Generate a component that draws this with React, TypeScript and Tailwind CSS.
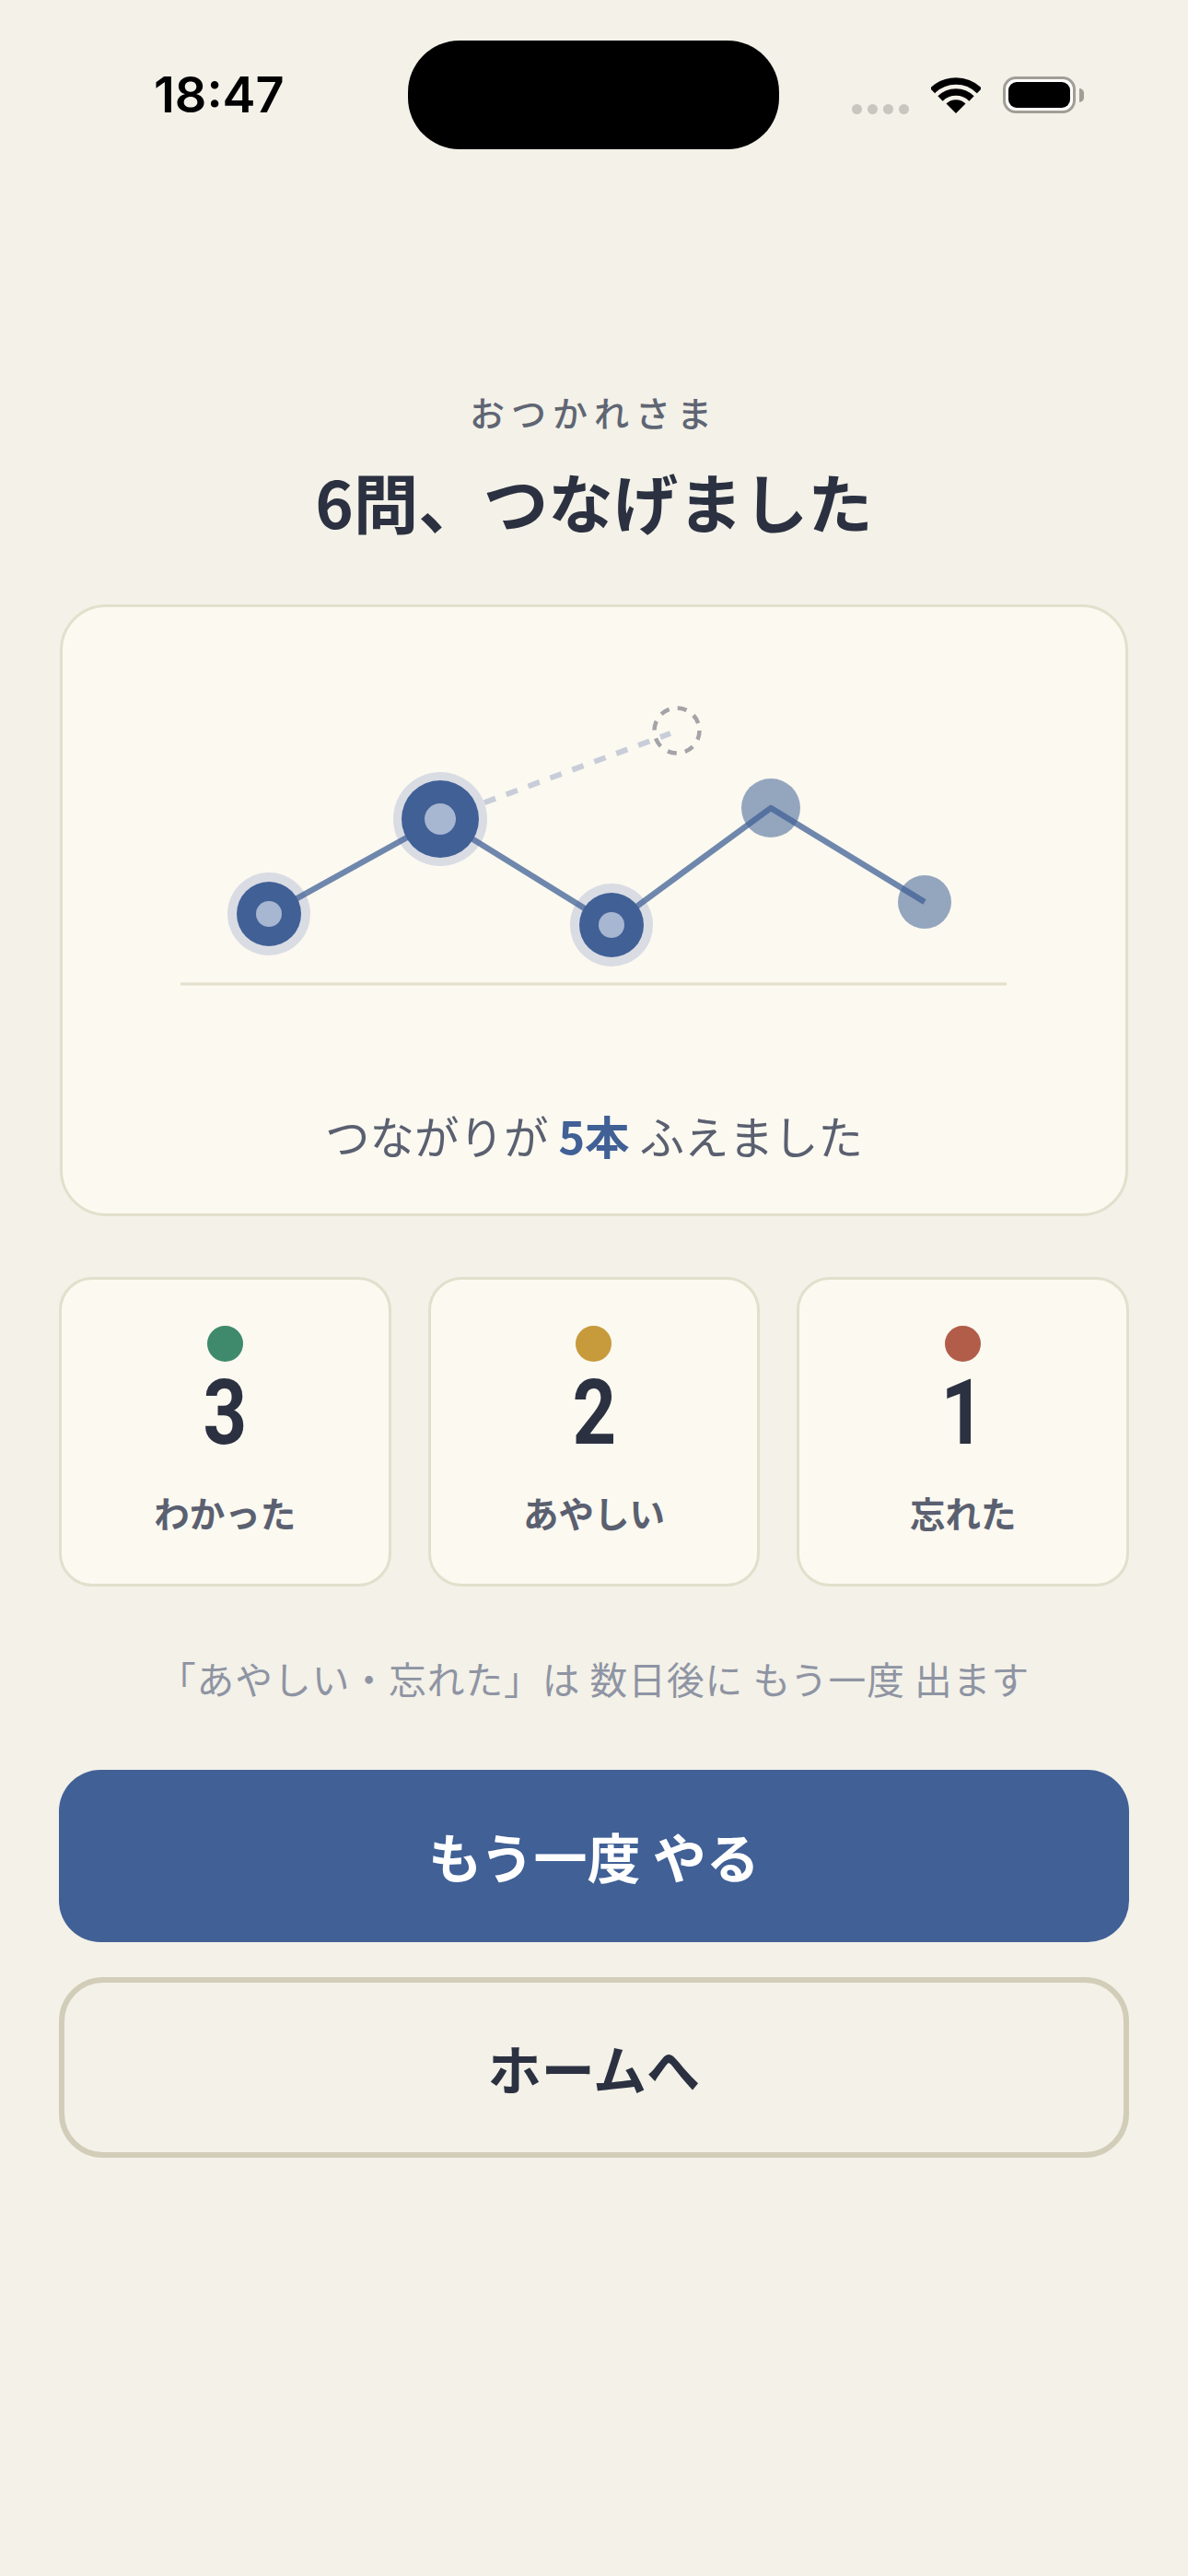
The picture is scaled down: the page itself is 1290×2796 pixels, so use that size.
const stats = [
  { label: "わかった", count: 3, dot: "bg-[#3f8a6d]" },
  { label: "あやしい", count: 2, dot: "bg-[#c79a3b]" },
  { label: "忘れた", count: 1, dot: "bg-[#b15d4a]" },
];

function StatusBar() {
  return (
    <div className="flex items-center h-[118px] mt-[44px]">
      <div className="w-[443px] pl-[167px] font-['Inter',sans-serif] text-[54px] leading-[60px] font-semibold text-black">
        18:47
      </div>
      <div className="w-[403px] h-[118px] rounded-[56px] bg-black" />
      <div className="flex items-end h-[41px] ml-[79px]">
        <div className="flex gap-[6px]">
          <span className="w-[11px] h-[11px] rounded-full bg-[#c8c6bf]" />
          <span className="w-[11px] h-[11px] rounded-full bg-[#c8c6bf]" />
          <span className="w-[11px] h-[11px] rounded-full bg-[#c8c6bf]" />
          <span className="w-[11px] h-[11px] rounded-full bg-[#c8c6bf]" />
        </div>
        <svg className="ml-[24px] mb-[1px]" width="54" height="39" viewBox="0 0 54 39" fill="none">
          <path d="M1.5 14.5A36 36 0 0 1 52.5 14.5" stroke="#000" strokeWidth="7.5" />
          <path d="M10 23A24 24 0 0 1 44 23" stroke="#000" strokeWidth="7.5" />
          <path d="M27 39L16.5 28.5A15 15 0 0 1 37.5 28.5Z" fill="#000" />
        </svg>
        <div className="ml-[24px] flex items-center">
          <div className="w-[79px] h-[40px] mb-[1px] rounded-[14px] border-[3px] border-[#a09e96] bg-white p-[3px]">
            <div className="w-full h-full rounded-[9px] bg-black" />
          </div>
          <div className="ml-[4px] w-[5px] h-[15px] rounded-r-full bg-[#a09e96]" />
        </div>
      </div>
    </div>
  );
}

function Chart() {
  return (
    <svg className="block w-full h-[380px]" viewBox="68 720 1154 380" fill="none">
      <line x1="196" y1="1068" x2="1093" y2="1068" stroke="#e4e0cb" strokeWidth="3" />
      <line x1="478" y1="889" x2="728" y2="796" stroke="#c8cdd9" strokeWidth="6" strokeDasharray="13 12.5" />
      <circle cx="735" cy="793" r="24.5" stroke="#a3a3a8" strokeWidth="4.5" strokeDasharray="10 9.25" />
      <circle cx="837" cy="877" r="32" fill="#406096" opacity="0.55" />
      <circle cx="1004" cy="979" r="29" fill="#406096" opacity="0.55" />
      <circle cx="292" cy="992" r="45" fill="#d9dce3" />
      <circle cx="478" cy="889" r="51" fill="#d9dce3" />
      <circle cx="664" cy="1004" r="45" fill="#d9dce3" />
      <polyline
        points="292,992 478,889 664,1004 837,877 1004,979"
        stroke="#406096"
        strokeWidth="6.5"
        opacity="0.75"
        strokeLinejoin="round"
      />
      <circle cx="292" cy="992" r="35" fill="#406096" />
      <circle cx="292" cy="992" r="14" fill="#a7b6d1" />
      <circle cx="478" cy="889" r="42" fill="#406096" />
      <circle cx="478" cy="889" r="17" fill="#a7b6d1" />
      <circle cx="664" cy="1004" r="35" fill="#406096" />
      <circle cx="664" cy="1004" r="14" fill="#a7b6d1" />
    </svg>
  );
}

export default function App() {
  return (
    <div className="w-[1290px] h-[2796px] overflow-hidden bg-[#f3f1e8] font-['Noto_Sans_CJK_JP',sans-serif]">
      <StatusBar />
      <div className="px-[65px]">
        <p className="mt-[261px] text-center text-[38px] leading-[48px] tracking-[7px] font-medium text-[#5f6573]">おつかれさま</p>
        <h1 className="mt-[30px] text-center text-[70.5px] leading-[84px] font-bold text-[#2b3140]">6問、つなげました</h1>

        <div className="mt-[71px] h-[664px] rounded-[50px] border-[3px] border-[#e2dfcc] bg-[#fbf9f0] pt-[61px]">
          <Chart />
          <p className="mt-[97px] text-center text-[48.5px] leading-[70px] text-[#5a6070]">
            つながりが <span className="font-bold text-[#406096]">5本</span> ふえました
          </p>
        </div>

        <div className="mt-[66px] -mx-[1px] grid grid-cols-3 gap-[40px]">
          {stats.map((stat) => (
            <div
              key={stat.label}
              className="h-[336px] rounded-[36px] border-[3px] border-[#e2dfcc] bg-[#fbf9f0] pt-[50px] flex flex-col items-center"
            >
              <span className={`w-[39px] h-[39px] rounded-full ${stat.dot}`} />
              <span className="mt-[10px] inline-block scale-x-[0.84] font-['Roboto',sans-serif] text-[99px] leading-[90px] font-bold text-[#2b3140]">
                {stat.count}
              </span>
              <span className="mt-[38px] text-[38.5px] leading-[50px] font-bold text-[#5a6070]">{stat.label}</span>
            </div>
          ))}
        </div>

        <p className="mt-[72px] -mx-[20px] text-center text-[40.7px] leading-[56px] tracking-[1px] text-[#8f94a3]">
          「あやしい・忘れた」は 数日後に もう一度 出ます
        </p>

        <button className="mt-[71px] -ml-[1px] block w-[1162px] h-[187px] rounded-[45px] bg-[#406096] text-[58px] font-bold text-white">
          もう一度 やる
        </button>
        <button className="mt-[38px] -ml-[1px] block w-[1162px] h-[196px] rounded-[48px] border-[6px] border-[#d2cdb8] text-[58px] font-bold text-[#2b3140]">
          ホームへ
        </button>
      </div>
    </div>
  );
}
